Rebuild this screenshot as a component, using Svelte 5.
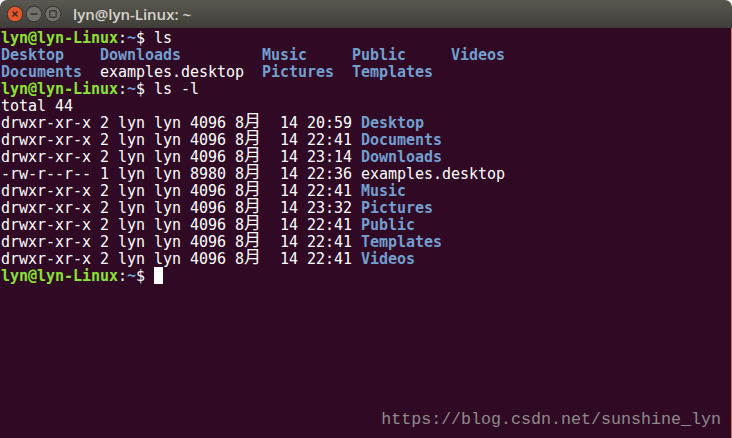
<script>
	const prompt = 'lyn@lyn-Linux';

	const listing = [
		['drwxr-xr-x 2', '4096', '14 20:59', 'Desktop', true],
		['drwxr-xr-x 2', '4096', '14 22:41', 'Documents', true],
		['drwxr-xr-x 2', '4096', '14 23:14', 'Downloads', true],
		['-rw-r--r-- 1', '8980', '14 22:36', 'examples.desktop', false],
		['drwxr-xr-x 2', '4096', '14 22:41', 'Music', true],
		['drwxr-xr-x 2', '4096', '14 23:32', 'Pictures', true],
		['drwxr-xr-x 2', '4096', '14 22:41', 'Public', true],
		['drwxr-xr-x 2', '4096', '14 22:41', 'Templates', true],
		['drwxr-xr-x 2', '4096', '14 22:41', 'Videos', true]
	];
</script>

<svelte:head>
	<title>lyn@lyn-Linux: ~</title>
</svelte:head>

<div class="window">
	<header class="titlebar">
		<div class="buttons">
			<svg class="btn" viewBox="0 0 18 18" width="18" height="18">
				<circle cx="9" cy="9" r="8.2" fill="#35342f" />
				<circle cx="9" cy="9" r="7.3" fill="#e4572a" />
				<path d="M6.5 6.5l5 5M11.5 6.5l-5 5" stroke="#3b2a22" stroke-width="1.5" fill="none" />
			</svg>
			<svg class="btn" viewBox="0 0 18 18" width="18" height="18">
				<circle cx="9" cy="9" r="8.2" fill="#35342f" />
				<circle cx="9" cy="9" r="7.3" fill="#72716a" />
				<path d="M5.5 9h7" stroke="#3c3b37" stroke-width="1.8" fill="none" />
			</svg>
			<svg class="btn" viewBox="0 0 18 18" width="18" height="18">
				<circle cx="9" cy="9" r="8.2" fill="#35342f" />
				<circle cx="9" cy="9" r="7.3" fill="#72716a" />
				<rect x="5.75" y="5.75" width="6.5" height="6.5" rx="1" stroke="#3c3b37" stroke-width="1.4" fill="none" />
			</svg>
		</div>
		<span class="title">lyn@lyn-Linux: ~</span>
	</header>

	<main class="terminal">
		<div class="line"><span class="user">{prompt}</span>:<span class="path">~</span>$ ls</div>
		<div class="ls-grid">
			<span class="dir">Desktop</span>
			<span class="dir">Downloads</span>
			<span class="dir">Music</span>
			<span class="dir">Public</span>
			<span class="dir">Videos</span>
			<span class="dir">Documents</span>
			<span>examples.desktop</span>
			<span class="dir">Pictures</span>
			<span class="dir">Templates</span>
		</div>
		<div class="line"><span class="user">{prompt}</span>:<span class="path">~</span>$ ls -l</div>
		<div class="line">total 44</div>
		{#each listing as [mode, size, time, name, isDir]}
			<div class="line">{mode} lyn lyn {size} 8<span class="cjk">月</span>{'  '}{time} <span class:dir={isDir}>{name}</span></div>
		{/each}
		<div class="line"><span class="user">{prompt}</span>:<span class="path">~</span>$ <span class="cursor"></span></div>
	</main>

	<div class="watermark">https://blog.csdn.net/sunshine_lyn</div>
</div>

<style>
	:global(body) {
		margin: 0;
		background: #fff;
	}

	.window {
		position: relative;
		width: 732px;
		height: 438px;
		display: flex;
		flex-direction: column;
		overflow: hidden;
	}

	.titlebar {
		height: 28px;
		flex: none;
		box-sizing: border-box;
		display: flex;
		align-items: center;
		padding-left: 6px;
		border-radius: 7px 7px 0 0;
		background: linear-gradient(#595850, #3f3e39);
	}

	.buttons {
		display: flex;
		gap: 1px;
		width: 67px;
	}

	.btn {
		display: block;
	}

	.title {
		font-family: 'Open Sans', sans-serif;
		font-size: 15px;
		font-weight: 600;
		color: #d8d4cb;
	}

	.terminal {
		flex: 1;
		box-sizing: border-box;
		padding: 2px 0 0 1px;
		background: #300a24;
		border-right: 1px solid #df6c3e;
		color: #fff;
		font-family: 'DejaVu Sans Mono', monospace;
		font-size: 15px;
		letter-spacing: -0.03px;
		line-height: 17px;
		font-weight: 400;
	}

	.line {
		height: 17px;
		white-space: pre;
	}

	.ls-grid {
		display: grid;
		grid-template-columns: 99px 162px 90px 99px auto;
		justify-content: start;
		white-space: pre;
	}

	.user {
		color: #8ae234;
		font-weight: 700;
	}

	.path,
	.dir {
		color: #729fcf;
		font-weight: 700;
	}

	.cjk {
		display: inline-block;
		width: 18px;
		font-family: 'Noto Sans CJK SC', sans-serif;
		font-size: 17px;
		line-height: 0;
		vertical-align: 1px;
	}

	.cursor {
		display: inline-block;
		width: 9px;
		height: 17px;
		margin-top: -1px;
		background: #fff;
		vertical-align: top;
	}

	.watermark {
		position: absolute;
		right: 11px;
		bottom: 8px;
		font-family: 'Liberation Mono', monospace;
		font-size: 16.67px;
		line-height: 20px;
		color: #8e8a8c;
	}
</style>
